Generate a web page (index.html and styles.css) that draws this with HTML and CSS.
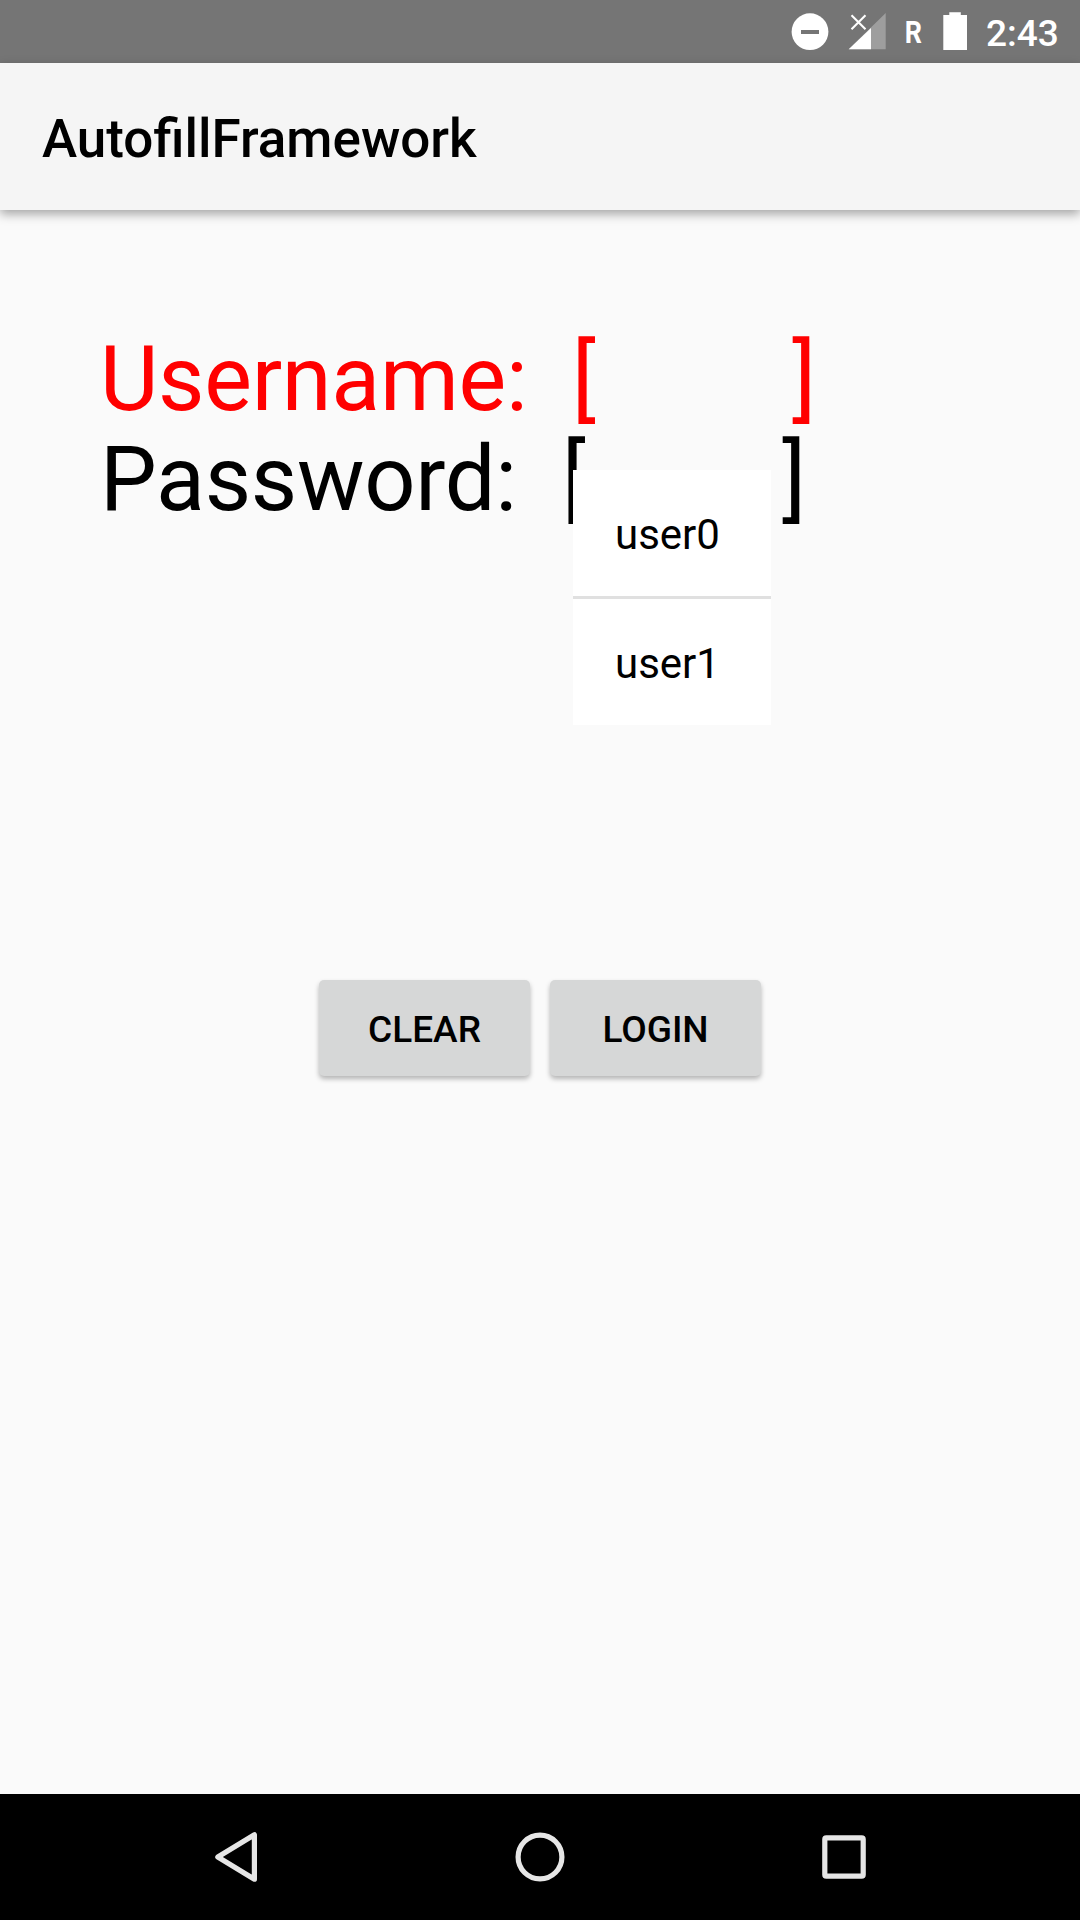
FILE: index.html
```html
<!DOCTYPE html>
<html lang="en">
<head>
<meta charset="utf-8">
<title>AutofillFramework</title>
<link rel="stylesheet" href="styles.css">
</head>
<body>
<div class="screen">
  <div class="status-bar">
    <svg class="status-icons" width="180" height="63" viewBox="0 0 180 63" fill="#fff">
      <circle cx="20" cy="31.7" r="18.4"/>
      <path d="M11 30h18v4H11z" fill="#757575"/>
      <path d="M95.700 13v36.300H58.700z" fill="#9e9e9e"/>
      <path d="M81 28v21.300H58.700z"/>
      <path d="M61.500 15.300l14 14m0-14l-14 14" stroke="#fff" stroke-width="2.100"/>
      <path d="M153.300 15h6v-2.700h11.500V15h6.200v35h-23.700z"/>
      <text class="roaming" transform="translate(114.800 43) scale(.84 1)">R</text>
    </svg>
    <span class="clock">2:43</span>
  </div>
  <header class="app-bar"><h1 class="title">AutofillFramework</h1></header>
  <main class="content">
    <div class="form">
      <div class="field focused"><span class="label">Username:</span><span class="value"><span>[</span><span>]</span></span></div>
      <div class="field"><span class="label password">Password:</span><span class="value"><span>[</span><span>]</span></span></div>
      <div class="suggestions">
        <div class="suggestion">user0</div>
        <div class="suggestion">user1</div>
      </div>
    </div>
    <div class="actions">
      <button class="button">CLEAR</button>
      <button class="button">LOGIN</button>
    </div>
  </main>
  <nav class="nav-bar">
    <svg class="nav-icon" width="60" height="60" viewBox="0 0 60 60"><path d="M48.400 7.800v44.400L11.800 30z"/></svg>
    <svg class="nav-icon" width="60" height="60" viewBox="0 0 60 60"><circle cx="30" cy="30" r="21.900"/></svg>
    <svg class="nav-icon" width="60" height="60" viewBox="0 0 60 60"><rect x="10.800" y="10.800" width="38.400" height="38.400" rx="1.500"/></svg>
  </nav>
</div>
</body>
</html>
```
FILE: styles.css
```css
* { box-sizing: border-box; }

body {
  margin: 0;
  font-family: Roboto, sans-serif;
  color: #000;
}

.screen {
  display: flex;
  flex-direction: column;
  width: 1080px;
  height: 1920px;
  background: #fafafa;
}

.status-bar {
  display: flex;
  flex: none;
  justify-content: flex-end;
  height: 63px;
  padding-right: 21px;
  background: #757575;
}

.status-icons { flex: none; margin-right: 16px; }

.roaming { font-size: 32px; font-weight: 700; }

.clock {
  width: 73px;
  font-size: 37px;
  font-weight: 500;
  line-height: 67px;
  color: #fff;
  white-space: nowrap;
}

.app-bar {
  display: flex;
  flex: none;
  align-items: center;
  height: 147px;
  padding: 5px 42px 0;
  background: #f5f5f5;
  box-shadow: 0 4px 10px rgba(0, 0, 0, 0.35);
}

.title {
  margin: 0;
  font-size: 53px;
  font-weight: 500;
  line-height: 62px;
}

.content {
  display: flex;
  flex: 1;
  flex-direction: column;
  padding-top: 120px;
}

.form {
  position: relative;
  height: 650px;
  padding-left: 100px;
}

.field {
  display: flex;
  height: 100px;
  font-size: 90px;
  line-height: 100px;
}

.focused { color: #f00; }

.label {
  width: 472px;
  letter-spacing: -0.3px;
}

.password { width: 462px; }

.value {
  display: flex;
  justify-content: space-between;
  width: 244px;
}

.suggestions {
  position: absolute;
  top: 140px;
  left: 573px;
  width: 198px;
  background: #fff;
}

.suggestion {
  height: 126px;
  padding-left: 42px;
  font-size: 42px;
  line-height: 130px;
}

.suggestion + .suggestion {
  height: 129px;
  border-top: 3px solid #e0e0e0;
}

.actions {
  display: flex;
  justify-content: center;
  gap: 20px;
}

.button {
  width: 211px;
  height: 96px;
  padding: 3px 0 0;
  border: 0;
  border-radius: 5px;
  background: #d6d7d7;
  box-shadow: 0 3px 5px rgba(0, 0, 0, 0.28);
  font-family: inherit;
  font-size: 37px;
  font-weight: 500;
  color: #000;
}

.nav-bar {
  display: flex;
  flex: none;
  align-items: center;
  justify-content: center;
  gap: 244px;
  height: 126px;
  background: #000;
}

.nav-icon {
  fill: none;
  stroke: #e6e6e6;
  stroke-width: 5.2;
  stroke-linejoin: round;
}
```
